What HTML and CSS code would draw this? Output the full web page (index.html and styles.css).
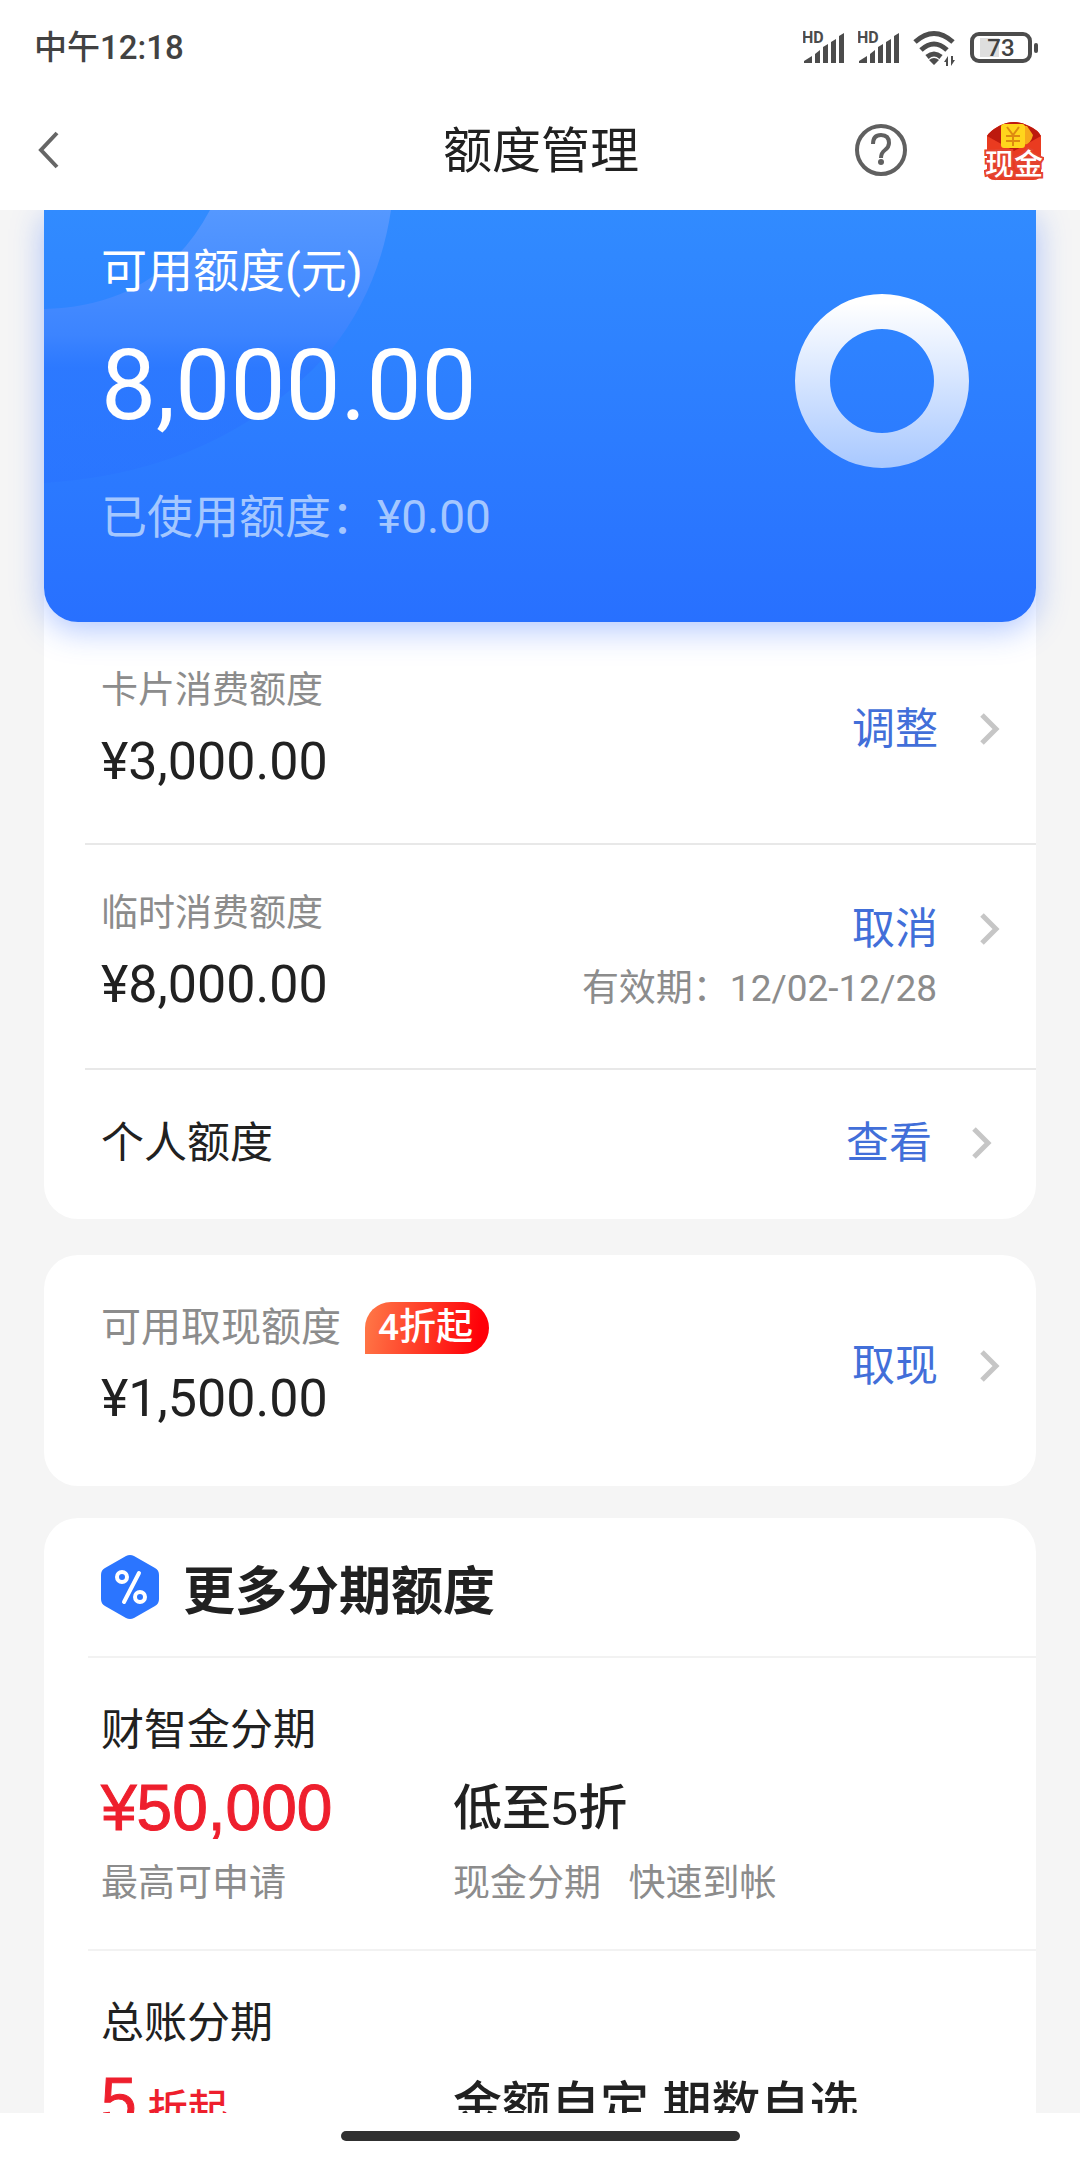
FILE: index.html
```html
<!DOCTYPE html>
<html lang="zh-CN">
<head>
<meta charset="utf-8">
<meta name="viewport" content="width=device-width, initial-scale=1">
<title>额度管理</title>
<link rel="stylesheet" href="styles.css">
</head>
<body>
<div class="app">
  <div class="statusbar">
    <span class="clock">中午12:18</span>
    <div class="status-icons">
      <svg class="signal" width="42" height="36" viewBox="0 0 42 36"><text class="hd" x="-1" y="13">HD</text><path d="M1 33v-2l8-5v7zM12 33v-9l5-4v13zM20 33V17l5-3v19zM28 33V12l5-3v24zM36 33V6l5-3v30z"/></svg>
      <svg class="signal" width="42" height="36" viewBox="0 0 42 36"><text class="hd" x="-1" y="13">HD</text><path d="M1 33v-2l8-5v7zM12 33v-9l5-4v13zM20 33V17l5-3v19zM28 33V12l5-3v24zM36 33V6l5-3v30z"/></svg>
      <svg class="wifi" width="44" height="36" viewBox="0 0 44 36"><g fill="none" stroke="#4c4c4c" stroke-width="5"><path d="M2 12q19-17 38 0M8 20q13-12 26 0M14 27q7-6 14 0"/></g><path d="M16 30q5-4 10 0l-5 5zM35 26v10h-2v-4h-2l4-6M38 36V26h2v4h2l-4 6"/></svg>
      <svg width="70" height="32" viewBox="0 0 70 32"><rect x="10" y="6" width="19" height="19" fill="#dedede"/><rect x="2" y="2" width="58" height="27" rx="7" fill="none" stroke="#4c4c4c" stroke-width="4"/><rect x="64" y="11" width="4" height="10" rx="2" fill="#4c4c4c"/><text class="level" x="31" y="24" text-anchor="middle">73</text></svg>
    </div>
  </div>
  <header class="navbar">
    <button class="icon-btn back" aria-label="返回"><svg width="22" height="40" viewBox="0 0 22 40"><path d="M19 3 3 20l16 17" fill="none" stroke="#666" stroke-width="4"/></svg></button>
    <h1 class="title">额度管理</h1>
    <div class="nav-actions">
      <button class="icon-btn" aria-label="帮助"><svg width="54" height="54" viewBox="0 0 54 54" fill="none" stroke="#606060"><circle cx="27" cy="27" r="24" stroke-width="4"/><path d="M19 21q0-9 8-9t8 8q0 4-4 7t-4 8" stroke-width="4"/><circle cx="27" cy="39" r="3" fill="#606060" stroke="none"/></svg></button>
      <a class="cash" href="#cash" aria-label="现金"><svg width="60" height="62" viewBox="0 0 60 62"><path d="M3 17q3-5 12-10 15-8 30 0 9 4 12 10v38q-1 6-8 6H11q-7 0-8-6z" fill="#ea3b20"/><path d="M3 17q3-5 12-10 15-8 30 0 9 4 12 10L30 32z" fill="#bd1a0e"/><path d="M38 7h5l6 9q-2 9-9 10z" fill="#f6a91b"/><rect x="17" y="5" width="24" height="24" rx="3" fill="#ffd51c"/><path d="m23 8 6 8 6-8M22 17h14M22 22h14M29 16v11" fill="none" stroke="#de8a10" stroke-width="2"/><text class="cash-text" x="30" y="56" text-anchor="middle">现金</text></svg></a>
    </div>
  </header>

  <main class="content">
    <section class="card limits">
      <div class="hero">
        <svg class="rings" width="350" height="300" viewBox="0 0 350 300"><defs><linearGradient id="ring" x1="0" y1="0" x2="0" y2="1"><stop offset="0" stop-color="#5598ff"/><stop offset=".46" stop-color="#3c84ff"/><stop offset=".58" stop-color="#2c77ff" stop-opacity=".8"/><stop offset="1" stop-color="#2870ff" stop-opacity=".4"/></linearGradient></defs><path d="M166 0H347Q335 80 287 140 180 262 0 273V99Q115 96 166 0z" fill="url(#ring)"/></svg>
        <div class="hero-text">
          <p class="hero-label">可用额度(元)</p>
          <p class="hero-amount">8,000.00</p>
          <p class="hero-used">已使用额度：¥0.00</p>
        </div>
        <svg class="donut" width="174" height="174" viewBox="0 0 174 174"><defs><linearGradient id="donut" x1="0" y1="0" x2="0" y2="1"><stop offset=".05" stop-color="#fff"/><stop offset="1" stop-color="#a8c8ff"/></linearGradient></defs><path fill="url(#donut)" fill-rule="evenodd" d="M87 0a87 87 0 1 1 0 174 87 87 0 0 1 0-174m0 35a52 52 0 1 0 0 104 52 52 0 0 0 0-104"/></svg>
      </div>
      <div class="row row-first">
        <div class="info"><span class="label">卡片消费额度</span><span class="amount">¥3,000.00</span></div>
        <a class="action" href="#adjust">调整<svg class="chevron" width="20" height="32" viewBox="0 0 20 32"><path d="m2 2 14 14L2 30"/></svg></a>
      </div>
      <div class="row row-temp">
        <div class="info"><span class="label">临时消费额度</span><span class="amount">¥8,000.00</span></div>
        <div class="side">
          <a class="action" href="#cancel">取消<svg class="chevron" width="20" height="32" viewBox="0 0 20 32"><path d="m2 2 14 14L2 30"/></svg></a>
          <span class="validity">有效期：12/02-12/28</span>
        </div>
      </div>
      <div class="row row-personal">
        <span class="name">个人额度</span>
        <a class="action" href="#view">查看<svg class="chevron" width="20" height="32" viewBox="0 0 20 32"><path d="m2 2 14 14L2 30"/></svg></a>
      </div>
    </section>

    <section class="card withdraw">
      <div class="info"><span class="label label-large">可用取现额度<em class="tag">4折起</em></span><span class="amount">¥1,500.00</span></div>
      <a class="action" href="#withdraw">取现<svg class="chevron" width="20" height="32" viewBox="0 0 20 32"><path d="m2 2 14 14L2 30"/></svg></a>
    </section>

    <section class="card more">
      <h2 class="more-title"><svg width="58" height="64" viewBox="0 0 58 64"><path d="M25 1q4-2 8 0l21 12q4 2 4 7v24q0 5-4 7L33 63q-4 2-8 0L4 51q-4-2-4-7V20q0-5 4-7z" fill="#2b75ff"/><g fill="none" stroke="#fff" stroke-width="4"><circle cx="21" cy="22" r="5"/><circle cx="39" cy="42" r="5"/><path d="M38 18 23 47" stroke-linecap="round"/></g></svg>更多分期额度</h2>
      <article class="plan">
        <h3 class="name">财智金分期</h3>
        <div class="plan-grid">
          <span class="price">¥50,000</span><span class="headline">低至5折</span>
          <span class="note">最高可申请</span><span class="note">现金分期&nbsp;&nbsp; 快速到帐</span>
        </div>
      </article>
      <article class="plan">
        <h3 class="name">总账分期</h3>
        <div class="plan-grid">
          <span class="price">5<small> 折起</small></span><span class="headline">金额自定 期数自选</span>
        </div>
      </article>
    </section>
  </main>
  <div class="homebar"><span class="handle"></span></div>
</div>
</body>
</html>
```
FILE: styles.css
```css
* { box-sizing: border-box; }
body {
  margin: 0;
  background: #f5f5f5;
  color: #212121;
  font-family: Roboto, "Noto Sans CJK SC", sans-serif;
}
h1, h2, h3, p { margin: 0; font-weight: 400; }
a { color: inherit; text-decoration: none; }
svg { display: block; flex: none; }
.app { display: flex; flex-direction: column; height: 100vh; }

.statusbar {
  display: flex;
  align-items: center;
  justify-content: space-between;
  flex: none;
  height: 96px;
  padding: 0 40px 0 34px;
  background: #fff;
  color: #424242;
}
.clock { font-size: 33px; line-height: 40px; font-weight: 500; }
.status-icons { display: flex; align-items: center; gap: 13px; }
.signal, .wifi { fill: #4c4c4c; }
.hd { font-size: 16px; font-weight: 700; }
.level { font-size: 24px; font-weight: 500; fill: #424242; }

.navbar {
  display: grid;
  grid-template-columns: 1fr auto 1fr;
  align-items: center;
  flex: none;
  height: 114px;
  padding: 0 36px 6px 38px;
  background: #fff;
}
.icon-btn { padding: 0; border: 0; background: none; }
.back { justify-self: start; }
.title { padding-top: 4px; font-size: 49px; line-height: 64px; }
.nav-actions { display: flex; align-items: center; justify-self: end; gap: 76px; }
.cash-text {
  font-size: 29px;
  font-weight: 500;
  fill: #fff;
  stroke: #e5442f;
  stroke-width: 4px;
  paint-order: stroke;
}

.content {
  display: flex;
  flex-direction: column;
  flex: 1;
  min-height: 0;
  gap: 36px;
  padding: 0 44px;
  overflow: hidden;
}
.card { flex: none; border-radius: 34px; background: #fff; }
.limits { border-radius: 0 0 34px 34px; }

.hero {
  position: relative;
  display: flex;
  justify-content: space-between;
  height: 412px;
  padding: 28px 67px 0 57px;
  border-radius: 0 0 34px 34px;
  background: linear-gradient(#318bff, #2870ff);
  box-shadow: 0 8px 32px rgba(40, 100, 255, .36);
  color: #fff;
}
.rings { position: absolute; left: 0; top: 0; }
.hero-text { position: relative; }
.hero-label { font-size: 46px; line-height: 66px; }
.hero-amount { margin-top: 24px; font-size: 98px; line-height: 116px; }
.hero-used { margin-top: 40px; font-size: 46px; line-height: 66px; color: #a4c7ff; }
.donut { margin-top: 56px; }

.row {
  display: flex;
  justify-content: space-between;
  align-items: center;
  margin-left: 41px;
  padding: 0 36px 0 16px;
}
.row + .row { border-top: 2px solid #e8e8e8; }
.row-first { height: 221px; padding-bottom: 8px; }
.row-temp { height: 225px; }
.row-temp .info { padding-bottom: 10px; }
.row-temp .side { padding-top: 4px; }
.row-personal { height: 151px; padding-right: 44px; padding-bottom: 4px; }
.row-personal .action { gap: 40px; }
.info { display: flex; flex-direction: column; gap: 12px; }
.label { font-size: 37px; line-height: 54px; color: #8c8c8c; }
.amount { font-size: 52px; line-height: 64px; }
.name { font-size: 43px; line-height: 58px; }
.action {
  display: flex;
  align-items: center;
  gap: 42px;
  font-size: 43px;
  line-height: 60px;
  color: #426fd9;
}
.chevron { fill: none; stroke: #c6c6c6; stroke-width: 5px; }
.side { display: flex; flex-direction: column; align-items: flex-end; }
.validity { margin-right: 63px; font-size: 37px; line-height: 60px; color: #8c8c8c; }

.withdraw {
  display: flex;
  align-items: center;
  justify-content: space-between;
  height: 231px;
  padding: 0 36px 10px 57px;
}
.label-large { display: flex; align-items: center; gap: 24px; font-size: 40px; }
.tag {
  padding: 0 16px 0 13px;
  border-radius: 26px 26px 26px 0;
  background: linear-gradient(100deg, #ff7a48, #ff0008 90%);
  color: #fff;
  font-size: 37px;
  line-height: 52px;
  font-style: normal;
  font-weight: 500;
}

.more { margin-top: -4px; }
.more-title {
  display: flex;
  align-items: center;
  gap: 24px;
  height: 138px;
  padding-left: 57px;
  font-size: 52px;
  font-weight: 700;
}
.plan { margin-left: 44px; padding: 43px 0 0 13px; border-top: 2px solid #f2f2f2; }
.plan + .plan { margin-top: 38px; }
.plan-grid { display: grid; grid-template-columns: 352px 1fr; align-items: center; }
.price {
  font-family: "Liberation Sans", "Noto Sans CJK SC", sans-serif;
  font-size: 64px;
  line-height: 98px;
  color: #ee1f2d;
  -webkit-text-stroke: 1px #ee1f2d;
}
.price small { font-size: 40px; -webkit-text-stroke: 0; font-weight: 500; }
.headline {
  font-family: "Liberation Sans", "Noto Sans CJK SC", sans-serif;
  font-size: 49px;
  line-height: 80px;
  font-weight: 500;
}
.note { font-size: 37px; line-height: 54px; color: #8c8c8c; }

.homebar {
  display: flex;
  align-items: center;
  justify-content: center;
  flex: none;
  height: 45px;
  background: #fff;
}
.handle { width: 399px; height: 10px; border-radius: 5px; background: #303030; }
```
